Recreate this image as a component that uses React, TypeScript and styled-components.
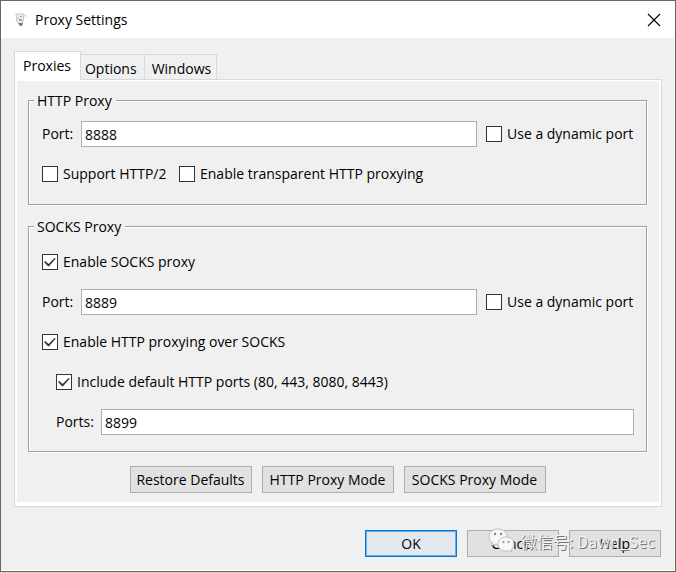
import React from "react";
import styled, { createGlobalStyle, css } from "styled-components";

const Global = createGlobalStyle`
  *, *::before, *::after { box-sizing: border-box; }
  body {
    margin: 0;
    color: #000;
    background: #f0f0f0;
    font: 14px/20px "Open Sans", "Noto Sans", "Noto Sans CJK SC", sans-serif;
  }
  button, input { font: inherit; color: inherit; }
`;

const Dialog = styled.main`
  position: relative;
  display: flex;
  flex-direction: column;
  min-height: 100vh;
  background: #f0f0f0;
  border: 1px solid #666;
  box-shadow: inset -1px -1px 0 #fff;
`;

const TitleBar = styled.header`
  display: flex;
  align-items: center;
  height: 37px;
  padding: 0 14px 0 11px;
  background: #fff;
`;

const Title = styled.h1`
  flex: 1;
  margin: 0 0 0 7px;
  font-size: 14px;
  font-weight: 400;
`;

const CloseButton = styled.button`
  display: flex;
  padding: 0;
  border: 0;
  background: none;
`;

const Body = styled.div`
  flex: 1;
  padding: 13px 13px 14px;
`;

const TabList = styled.div`
  display: flex;
  align-items: flex-end;
`;

const Tab = styled.button<{ $active?: boolean; $last?: boolean }>`
  height: 25px;
  padding: ${(p) => (p.$last ? "3px 5px 0 7px" : "3px 7px 0 4px")};
  border: 1px solid #d9d9d9;
  border-width: 1px 1px 0 0;
  background: #f0f0f0;
  white-space: nowrap;
  ${(p) =>
    p.$active &&
    css`
      z-index: 1;
      height: 29px;
      margin-bottom: -1px;
      padding: 0 9px 0 8px;
      border-left-width: 1px;
      background: #fff;
    `}
`;

const TabPanel = styled.section`
  padding: 10px 14px 9px 13px;
  border: 1px solid #d9d9d9;
  box-shadow: inset 2px 1px 0 #fff, inset -2px -4px 0 #fff;
`;

const Group = styled.fieldset<{ $compact?: boolean }>`
  display: flex;
  flex-direction: column;
  gap: 14px;
  min-width: 0;
  margin: 0 0 11px;
  padding: ${(p) => (p.$compact ? "10px 12px 17px 13px" : "12px 12px 16px 13px")};
  border: 1px solid #a0a0a0;
  box-shadow: 1px 1px 0 #fff, inset 1px 1px 0 #fff;
`;

const Legend = styled.legend`
  margin-left: -8px;
  padding: 1px 4px 0 3px;
  background: #f0f0f0;
`;

const Row = styled.div<{ $indent?: boolean }>`
  display: flex;
  align-items: center;
  gap: 9px;
  min-height: 26px;
  padding-left: ${(p) => (p.$indent ? 14 : 0)}px;
`;

const Field = styled.label<{ $wide?: boolean }>`
  width: ${(p) => (p.$wide ? 36 : 30)}px;
  flex: none;
  white-space: nowrap;
`;

const TextBox = styled.input`
  flex: 1;
  min-width: 0;
  height: 26px;
  padding: 0 3px;
  border: 1px solid #abadb3;
  border-radius: 0;
  background: #fff;
`;

const CheckLabel = styled.label<{ $width?: number }>`
  display: flex;
  align-items: center;
  gap: 5px;
  min-width: ${(p) => p.$width ?? 0}px;
  white-space: nowrap;
`;

const CheckBox = styled.input`
  appearance: none;
  display: grid;
  place-items: center;
  flex: none;
  width: 16px;
  height: 16px;
  margin: 0;
  border: 1px solid #333;
  background: #fff;
  &:checked::after {
    content: "";
    width: 12px;
    height: 9px;
    background: #333;
    clip-path: polygon(0 50%, 10% 40%, 38% 72%, 88% 5%, 98% 12%, 42% 98%, 34% 98%);
  }
`;

const Actions = styled.div<{ $end?: boolean }>`
  display: flex;
  justify-content: ${(p) => (p.$end ? "flex-end" : "center")};
  gap: 10px;
  padding: ${(p) => (p.$end ? "23px 1px 0 0" : "3px 0 4px")};
`;

const Button = styled.button<{ $primary?: boolean; $width: number }>`
  height: 27px;
  min-width: ${(p) => p.$width}px;
  padding: 0 4px;
  border: 1px solid #adadad;
  background: #e1e1e1;
  white-space: nowrap;
  ${(p) =>
    p.$primary &&
    css`
      border-color: #0078d7;
      background: #e3e8f0;
      box-shadow: inset 0 0 0 1px #66aee7;
    `}
`;

const Watermark = styled.div`
  position: absolute;
  right: 20px;
  bottom: 17px;
  display: flex;
  align-items: center;
  gap: 6px;
  color: #f2f2f2;
  font: 16px/26px "Noto Sans CJK SC", sans-serif;
  text-shadow: 1px 1px 0 #777;
  white-space: nowrap;
  pointer-events: none;
`;

function Check({ children, on, width }: { children: string; on?: boolean; width?: number }) {
  return (
    <CheckLabel $width={width}>
      <CheckBox type="checkbox" defaultChecked={on} />
      {children}
    </CheckLabel>
  );
}

const JugIcon = () => (
  <svg width="16" height="16" viewBox="0 0 16 16" aria-hidden="true">
    <path d="M4 2h8l-1 8-2 2H7l-2-2z" fill="#eeeeec" stroke="#c4c4c0" />
    <path d="M12 4l2-1 1 2" fill="none" stroke="#ddd" />
    <path d="M6 11h5l-1 3H8z" fill="#777" />
    <path d="M8 4h2v1H8z" fill="#e08080" />
    <path d="M6 5h1v2H6z" fill="#c9a0c9" />
    <path d="M7 7h2v2H7z" fill="#80c080" />
    <path d="M9 7h1v2H9z" fill="#e0a060" />
  </svg>
);

const WeChatIcon = () => (
  <svg width="27" height="26" viewBox="0 0 27 26" aria-hidden="true">
    <g stroke="#aaa" strokeWidth="0.7" fill="#f8f8f8">
      <path d="M10 1C4.500 1 1 4.500 1 8.500c0 2.500 1.300 4.500 3.300 6L3.500 18l3.500-2c1 .3 2 .4 3 .4 5 0 9-3.400 9-7.900S15 1 10 1z" />
      <path d="M18 9c-4.500 0-8 3-8 7s3.500 7 8 7c1 0 2-.2 3-.5l3 1.700-.8-3c1.700-1.300 2.800-3 2.800-5.200 0-4-3.500-7-8-7z" />
    </g>
    <g fill="#888">
      <circle cx="7" cy="6" r="1.200" />
      <circle cx="13" cy="6" r="1.200" />
      <circle cx="15.500" cy="14" r="1" />
      <circle cx="20.500" cy="14" r="1" />
    </g>
  </svg>
);

export default function App() {
  return (
    <>
      <Global />
      <Dialog>
        <TitleBar>
          <JugIcon />
          <Title>Proxy Settings</Title>
          <CloseButton aria-label="Close">
            <svg width="14" height="14" viewBox="0 0 14 14" aria-hidden="true">
              <path d="M1 1l12 12M13 1L1 13" stroke="#000" strokeWidth="1.100" />
            </svg>
          </CloseButton>
        </TitleBar>
        <Body>
          <TabList role="tablist">
            <Tab role="tab" aria-selected="true" $active>Proxies</Tab>
            <Tab role="tab" aria-selected="false">Options</Tab>
            <Tab role="tab" aria-selected="false" $last>Windows</Tab>
          </TabList>
          <TabPanel role="tabpanel">
            <Group $compact>
              <Legend>HTTP Proxy</Legend>
              <Row>
                <Field htmlFor="http-port">Port:</Field>
                <TextBox id="http-port" defaultValue="8888" />
                <Check width={148}>Use a dynamic port</Check>
              </Row>
              <Row>
                <Check width={128}>Support HTTP/2</Check>
                <Check>Enable transparent HTTP proxying</Check>
              </Row>
            </Group>
            <Group>
              <Legend>SOCKS Proxy</Legend>
              <Row>
                <Check on>Enable SOCKS proxy</Check>
              </Row>
              <Row>
                <Field htmlFor="socks-port">Port:</Field>
                <TextBox id="socks-port" defaultValue="8889" />
                <Check width={148}>Use a dynamic port</Check>
              </Row>
              <Row>
                <Check on>Enable HTTP proxying over SOCKS</Check>
              </Row>
              <Row $indent>
                <Check on>Include default HTTP ports (80, 443, 8080, 8443)</Check>
              </Row>
              <Row $indent>
                <Field htmlFor="extra-ports" $wide>Ports:</Field>
                <TextBox id="extra-ports" defaultValue="8899" />
              </Row>
            </Group>
            <Actions>
              <Button $width={122}>Restore Defaults</Button>
              <Button $width={132}>HTTP Proxy Mode</Button>
              <Button $width={142}>SOCKS Proxy Mode</Button>
            </Actions>
          </TabPanel>
          <Actions $end>
            <Button $primary $width={92}>OK</Button>
            <Button $width={92}>Cancel</Button>
            <Button $width={92}>Help</Button>
          </Actions>
        </Body>
        <Watermark>
          <WeChatIcon />
          <span>微信号: Dawn_Sec</span>
        </Watermark>
      </Dialog>
    </>
  );
}
